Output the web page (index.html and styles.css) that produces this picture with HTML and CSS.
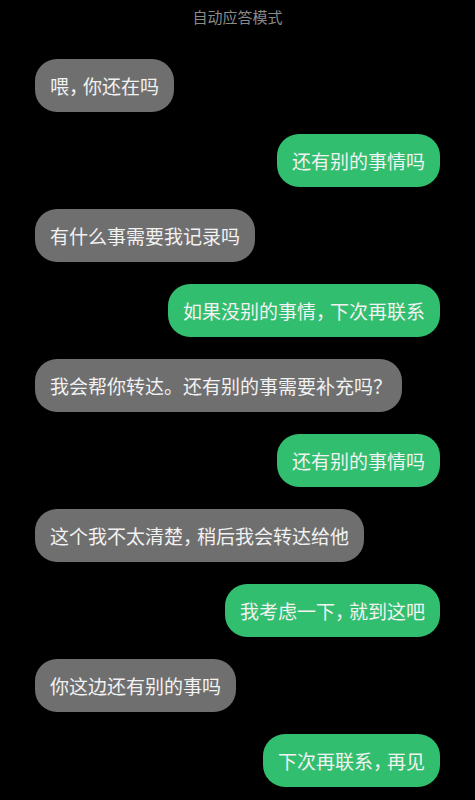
FILE: index.html
```html
<!DOCTYPE html>
<html lang="zh-CN">
<head>
<meta charset="utf-8">
<link rel="stylesheet" href="styles.css">
</head>
<body>
<div class="title">自动应答模式</div>
<div class="chat">
  <div class="msg left">喂<span class="p">，</span>你还在吗</div>
  <div class="msg right">还有别的事情吗</div>
  <div class="msg left">有什么事需要我记录吗</div>
  <div class="msg right">如果没别的事情<span class="p">，</span>下次再联系</div>
  <div class="msg left">我会帮你转达。还有别的事需要补充吗<span class="p">？</span></div>
  <div class="msg right">还有别的事情吗</div>
  <div class="msg left">这个我不太清楚<span class="p">，</span>稍后我会转达给他</div>
  <div class="msg right">我考虑一下<span class="p">，</span>就到这吧</div>
  <div class="msg left">你这边还有别的事吗</div>
  <div class="msg right">下次再联系<span class="p">，</span>再见</div>
</div>
</body>
</html>
```
FILE: styles.css
```css
html, body {
  margin: 0;
  padding: 0;
  background: #000;
}
body {
  font-family: "Noto Sans CJK SC", "Noto Sans", sans-serif;
  width: 475px;
  height: 800px;
  overflow: hidden;
}
.title {
  text-align: center;
  color: #8a8a8a;
  font-size: 15px;
  line-height: 22px;
  padding-top: 6px;
}
.chat {
  display: flex;
  flex-direction: column;
  gap: 22px;
  padding: 31px 35px 0 35px;
}
.msg {
  font-size: 19px;
  line-height: 23px;
  padding: 15px 15px;
  border-radius: 22px;
  color: #f2f2f2;
  white-space: nowrap;
}
.p {
  letter-spacing: -5px;
}
.msg .p:last-child {
  letter-spacing: -5px;
  margin-right: 0;
}
.left {
  align-self: flex-start;
  background: #6f6f6f;
}
.right {
  align-self: flex-end;
  background: #31bf6f;
}
```
